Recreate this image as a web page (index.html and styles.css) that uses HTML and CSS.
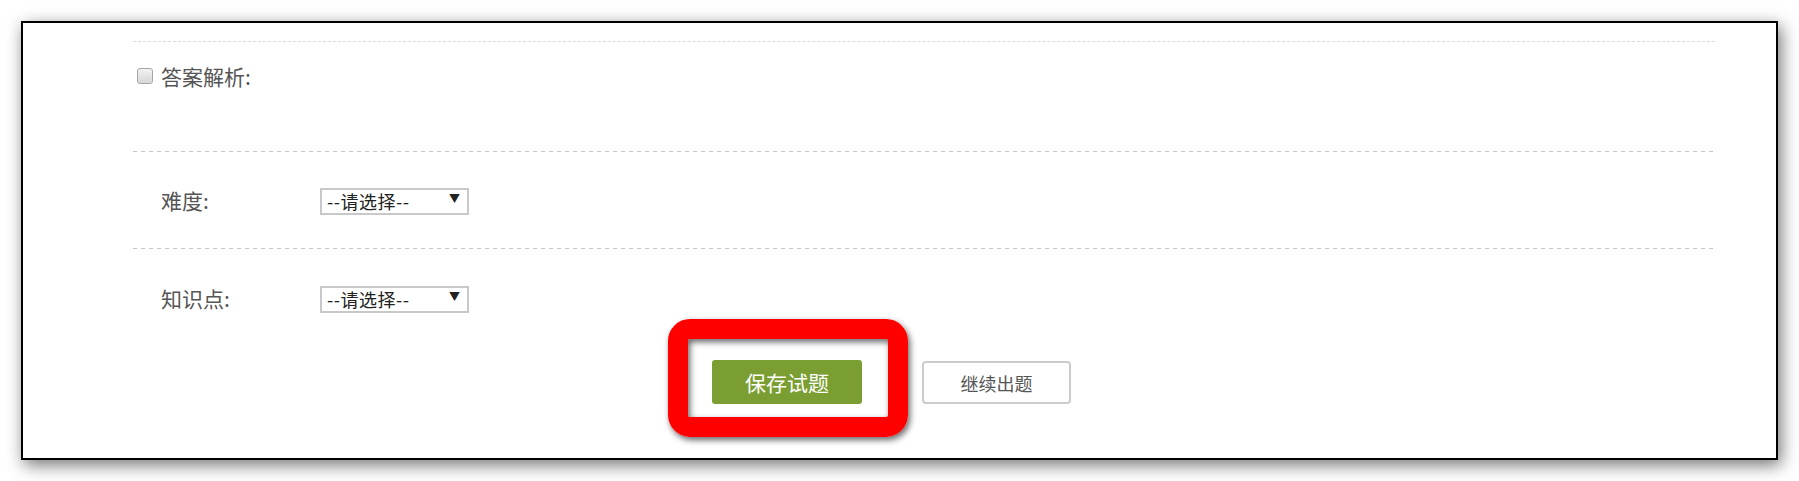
FILE: index.html
```html
<!DOCTYPE html>
<html lang="zh-CN">
<head>
  <meta charset="UTF-8">
  <meta name="viewport" content="width=device-width, initial-scale=1.0">
  <title>编辑试题</title>
  <link rel="stylesheet" href="styles.css">
</head>
<body>
  <div class="frame">
    <div class="content">
      <div class="row prev"></div>

      <div class="row analysis">
        <label class="check">
          <input type="checkbox" name="analysis">
          <span>答案解析:</span>
        </label>
      </div>

      <div class="row field difficulty">
        <span class="field-label">难度:</span>
        <span class="select-wrap">
          <select name="difficulty">
            <option>--请选择--</option>
            <option>简单</option>
            <option>一般</option>
            <option>困难</option>
          </select>
        </span>
      </div>

      <div class="row field knowledge">
        <span class="field-label">知识点:</span>
        <span class="select-wrap">
          <select name="knowledge">
            <option>--请选择--</option>
          </select>
        </span>
      </div>
    </div>

    <div class="actions">
      <span class="highlight">
        <button class="btn btn-save" type="button">保存试题</button>
      </span>
      <button class="btn btn-next" type="button">继续出题</button>
    </div>
  </div>
</body>
</html>
```

FILE: styles.css
```css
body {
  margin: 0;
  padding: 21px;
  background-color: #ffffff;
  font-family: "Noto Sans CJK SC", "Microsoft YaHei", sans-serif;
  color: #555555;
}

.frame {
  box-sizing: border-box;
  height: 439px;
  border: 2px solid #000000;
  background-color: #ffffff;
  box-shadow: 3px 5px 16px rgba(0, 0, 0, 0.55);
}

.content {
  padding: 0 61px 0 110px;
}

/* dashed separator, 4px dash / 4px gap */
.row {
  box-sizing: border-box;
  padding-bottom: 1px;
  background: repeating-linear-gradient(to right, #c6c6c6 0 4px, transparent 4px 8px) left bottom / 100% 1px no-repeat;
}

.row.prev {
  height: 19px;
  padding-bottom: 0;
  background: none;
  border-bottom: 1px dashed #dadada;
}

.analysis {
  height: 110px;
  padding-top: 24px;
}

.check {
  display: flex;
  align-items: center;
  height: 20px;
  font-size: 21px;
  line-height: 20px;
}

.check input {
  appearance: none;
  -webkit-appearance: none;
  box-sizing: border-box;
  width: 16px;
  height: 16px;
  margin: 0 8px 0 4px;
  border: 1px solid #a4a4a4;
  border-radius: 3px;
  background: linear-gradient(#f2f2f2, #d6d6d6);
  box-shadow: inset 0 0 1px #ffffff;
}

.field {
  display: flex;
  align-items: center;
  height: 97px;
  font-size: 21px;
}

.knowledge {
  height: 98px;
  background: none;
}

.field-label {
  width: 159px;
  padding-left: 28px;
}

.select-wrap {
  position: relative;
  display: inline-block;
}

.select-wrap select {
  appearance: none;
  -webkit-appearance: none;
  box-sizing: border-box;
  width: 149px;
  height: 27px;
  padding: 0 0 0 5px;
  border: 2px solid #c8c8c8;
  border-radius: 0;
  background-color: #ffffff;
  font-family: inherit;
  font-size: 18px;
  letter-spacing: 0.5px;
  line-height: 23px;
  color: #222222;
}

.select-wrap::after {
  content: "\25BC";
  position: absolute;
  right: 9px;
  top: 6px;
  font-size: 11px;
  line-height: 14px;
  color: #222222;
  pointer-events: none;
}

.actions {
  display: flex;
  justify-content: center;
  align-items: center;
  gap: 60px;
  margin-top: 13px;
  padding-right: 16px;
}

.btn {
  box-sizing: border-box;
  font-family: inherit;
  cursor: pointer;
}

.btn-save {
  display: block;
  width: 150px;
  height: 44px;
  border: none;
  border-radius: 3px;
  background-color: #7a9e31;
  color: #ffffff;
  font-size: 21px;
}

.btn-next {
  width: 149px;
  height: 43px;
  margin-top: 1px;
  border: 2px solid #cccccc;
  border-radius: 4px;
  background-color: #ffffff;
  color: #555555;
  font-size: 18px;
}

/* red annotation around the save button */
.highlight {
  position: relative;
  display: block;
}

.highlight::after {
  content: "";
  position: absolute;
  top: -41px;
  right: -46px;
  bottom: -33px;
  left: -44px;
  border: 20px solid #ff0000;
  border-radius: 22px;
  box-shadow: 2px 3px 6px rgba(0, 0, 0, 0.6), inset 2px 3px 6px rgba(0, 0, 0, 0.6);
  pointer-events: none;
}
```
